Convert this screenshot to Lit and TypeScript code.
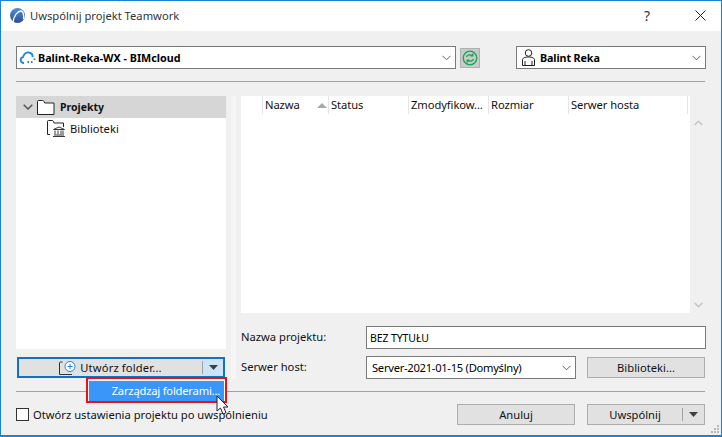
import { LitElement, html, css } from "lit";
import { customElement } from "lit/decorators.js";

const chevron = html`<svg class="chev" width="9" height="6" viewBox="0 0 9 6"><path d="M.5.8 4.500 4.800 8.500.8" fill="none" stroke="#606060" stroke-width="1"/></svg>`;
const caret = html`<svg width="9" height="5" viewBox="0 0 9 5"><path d="M0 0h9L4.500 5z" fill="#404040"/></svg>`;

@customElement("app-root")
export class AppRoot extends LitElement {
  static styles = css`
    :host { display: block; width: 722px; height: 437px; font-family: "Noto Sans", sans-serif; font-size: 11.2px; color: #111; }
    * { box-sizing: border-box; }
    .window { position: relative; width: 722px; height: 437px; border: 1px solid #1883d7; border-bottom-width: 2px; background: #f0f0f0; display: flex; flex-direction: column; overflow: hidden; }
    .title { height: 30px; flex: none; background: #fff; display: flex; align-items: center; padding: 0 0 2px 9px; gap: 5px; color: #333; }
    .title .name { flex: 1; }
    .help { width: 46px; text-align: center; font-size: 14px; margin-right: 7px; }
    .close { width: 36px; height: 28px; display: flex; align-items: center; justify-content: center; margin-right: 3px; }
    .body { flex: 1; display: flex; flex-direction: column; padding: 15px 15px 0; min-height: 0; }
    .top { display: flex; height: 23px; align-items: center; }
    .combo { height: 23px; background: #fff; border: 1px solid #7a7a7a; display: flex; align-items: center; font-weight: 700; font-size: 10.75px; color: #000; }
    .combo .grow { flex: 1; white-space: nowrap; }
    .combo .chev { margin-right: 4px; }
    .server { width: 440px; padding-left: 2px; gap: 2px; }
    .user { width: 190px; margin-left: auto; padding-left: 5px; gap: 5px; letter-spacing: -.12px; }
    .sync { width: 20px; height: 20px; margin-left: 4px; background: #cacaca; border: 1px solid #b0b0b0; display: flex; align-items: center; justify-content: center; }
    .sep { height: 1px; background: #a0a0a0; margin-right: 1px; flex: none; }
    .sep1 { margin-top: 12px; }
    .main { display: grid; grid-template-columns: 210px 5px 5px 5px 465px; margin-top: 14px; height: 283px; flex: none; }
    .left { grid-column: 1; display: flex; flex-direction: column; position: relative; }
    .strip { grid-column: 3; background: #f6f6f6; }
    .right { grid-column: 5; display: flex; flex-direction: column; }
    .tree { flex: 1; background: #fff; }
    .row { height: 22px; display: flex; align-items: center; }
    .row.sel { background: #d6d6d6; font-weight: 700; font-size: 10.5px; padding-left: 7px; }
    .row.sel svg.fold { margin-left: 4px; margin-right: 5px; }
    .row.sub { padding-left: 31px; padding-bottom: 2px; gap: 4px; }
    .split { margin: 8px 1px 1px; height: 21px; flex: none; border: 2px solid #0f72c4; background: #e1e1e1; display: flex; }
    .split .lbl { flex: 1; display: flex; align-items: center; justify-content: center; gap: 3px; letter-spacing: .15px; border-right: 1px solid #a0a0a0; margin: 2px 0; }
    .split .arrow { width: 20px; background: #cce4f7; display: flex; align-items: center; justify-content: center; }
    .list { height: 217px; flex: none; display: flex; }
    .grid { width: 449px; background: #fff; }
    .head { height: 18px; display: flex; width: 447px; background: #fff; border-right: 1px solid #e5e5e5; letter-spacing: -.08px; }
    .head div { border-left: 1px solid #e5e5e5; padding-left: 2px; line-height: 18px; white-space: nowrap; position: relative; }
    .head div:first-child { border-left: 0; padding: 0; }
    .head svg { position: absolute; right: 1px; top: 7px; }
    .scroll { flex: 1; display: flex; flex-direction: column; justify-content: space-between; align-items: center; padding: 24px 0 5px; }
    .form { display: grid; grid-template-columns: 125px 210px 11px 119px; margin-top: 13px; row-gap: 7px; align-items: center; }
    .lab { padding-bottom: 2px; }
    .inp { height: 23px; background: #fff; border: 1px solid #7a7a7a; display: flex; align-items: center; padding-left: 3px; color: #000; }
    .wide { grid-column: 2 / 5; font-size: 10.5px; letter-spacing: -.1px; }
    .select { padding-left: 5px; justify-content: space-between; letter-spacing: -.28px; }
    .select .chev { margin-right: 4px; }
    .btn { height: 21px; background: #e1e1e1; border: 1px solid #adadad; display: flex; align-items: center; justify-content: center; }
    .form .btn { width: 118px; }
    .sep2 { margin-top: 12px; }
    .foot { margin-top: 12px; display: flex; align-items: center; height: 21px; }
    .check { width: 13px; height: 13px; background: #fff; border: 1px solid #333; margin-right: 4px; }
    .chk { flex: 1; white-space: nowrap; }
    .foot .btn { width: 118px; }
    .foot .b1 { margin-right: 12px; }
    .foot .b2 { margin-right: 1px; padding: 0; }
    .foot .b2 .t { flex: 1; text-align: center; }
    .foot .b2 .a { width: 22px; height: 13px; border-left: 1px solid #a0a0a0; display: flex; align-items: center; justify-content: center; }
    .menu { position: absolute; left: 85px; top: 376px; width: 141px; height: 26px; border: 2px solid #e8121c; padding: 2px 1px 0; background: #fff; z-index: 2; }
    .menu div { height: 100%; background: #3a96f8; color: #fff; text-align: right; padding-right: 4px; line-height: 20px; white-space: nowrap; letter-spacing: -.2px; }
    .cursor { position: absolute; left: 215px; top: 394px; z-index: 3; }
    .grip { position: absolute; right: 1px; bottom: 1px; }
  `;

  render() {
    return html`<div class="window">
      <div class="title">
        <svg width="15" height="15" viewBox="0 0 15 15"><defs><linearGradient id="lg" x1="0" y1="0" x2="0" y2="1"><stop offset="0" stop-color="#4f8fd8"/><stop offset="1" stop-color="#2d4f96"/></linearGradient></defs><circle cx="7.500" cy="7.500" r="7.500" fill="url(#lg)"/><path d="M3 14C4 7 8 3 11 3c2 0 3 3 2.600 8" fill="none" stroke="#fff" stroke-width="1.400"/></svg>
        <span class="name">Uwspólnij projekt Teamwork</span>
        <span class="help">?</span>
        <span class="close"><svg width="11" height="11" viewBox="0 0 11 11"><path d="M.5.5l10 10M10.500.5l-10 10" stroke="#222" stroke-width="1" fill="none"/></svg></span>
      </div>
      <div class="body">
        <div class="top">
          <div class="combo server">
            <svg width="17" height="13" viewBox="0 0 17 13"><path d="M5 12C1 12 .5 7 4 6.200 4.500 3 7.500 1 10 1.500c2.500.5 3.700 2.500 3.700 4.500M15.500 7.500v1.500M12 11h1.500M8.500 11h1.500" fill="none" stroke="#1d86e8" stroke-width="1.800"/></svg>
            <span class="grow">Balint-Reka-WX - BIMcloud</span>${chevron}
          </div>
          <div class="sync"><svg width="16" height="16" viewBox="0 0 16 16" fill="none" stroke="#12a850" stroke-width="1.300"><circle cx="8" cy="8" r="6.800"/><path d="M4.500 7C5.200 4.800 8 4.200 10.300 5.400M10.800 3.400v2.400H8.400M11.500 9C10.800 11.200 8 11.800 5.700 10.600M5.200 12.600v-2.400h2.400"/></svg></div>
          <div class="combo user">
            <svg width="13" height="17" viewBox="0 0 13 17" fill="none" stroke="#222" stroke-width="1"><circle cx="6.500" cy="4" r="3.300"/><path d="M.5 16.500V11c0-2 2-3 6-3s6 1 6 3v5.500zM3 16v-4M10 16v-4"/></svg>
            <span class="grow">Balint Reka</span>${chevron}
          </div>
        </div>
        <div class="sep sep1"></div>
        <div class="main">
          <div class="left">
            <div class="tree">
              <div class="row sel">
                <svg width="10" height="6" viewBox="0 0 10 6"><path d="M.7.7 5 5l4.300-4.300" fill="none" stroke="#555" stroke-width="1.500"/></svg>
                <svg class="fold" width="18" height="15" viewBox="0 0 18 15"><path d="M.5 14.500V1.500q0-1 1-1h4q1 0 1.500 1l.7 1.500h9.300v11.500z" fill="#fff" stroke="#222"/></svg>
                Projekty
              </div>
              <div class="row sub">
                <svg width="19" height="17" viewBox="0 0 19 17" fill="none" stroke="#222"><path d="M3 14.500H.5V1.500q0-1 1-1h3.500q1 0 1.500 1l.5 1.500h9.500v4"/><path d="M6 16.500h12M7 15h10M8 14.200v-3.700M11 14.200v-3.700M14 14.200v-3.700M16 14.200v-3.700M6.500 9.500 12 7l5.500 2.500z" stroke-width=".9"/></svg>
                Biblioteki
              </div>
            </div>
            <div class="split">
              <div class="lbl">
                <svg width="18" height="14" viewBox="0 0 18 14" fill="none"><path d="M3.500 1h-2q-1 0-1 1v11.500H3M3 13.500h10" stroke="#333"/><circle cx="11" cy="5.500" r="5" fill="#fff" stroke="#1d86e8"/><path d="M11 3v5M8.500 5.500h5" stroke="#1d86e8"/></svg>
                Utwórz folder...
              </div>
              <div class="arrow">${caret}</div>
            </div>
          </div>
          <div class="strip"></div>
          <div class="right">
            <div class="list">
              <div class="grid">
                <div class="head">
                  <div style="width:21px"></div>
                  <div style="width:66px">Nazwa<svg width="10" height="5" viewBox="0 0 10 5"><path d="M0 5h10L5 0z" fill="#a8a8a8"/></svg></div>
                  <div style="width:80px">Status</div>
                  <div style="width:80px">Zmodyfikow...</div>
                  <div style="width:80px">Rozmiar</div>
                  <div style="width:119px">Serwer hosta</div>
                </div>
              </div>
              <div class="scroll">
                <svg width="9" height="6" viewBox="0 0 9 6"><path d="M.7 5 4.500 1.300 8.300 5" fill="none" stroke="#c4c4c4" stroke-width="1.600"/></svg>
                <svg width="9" height="6" viewBox="0 0 9 6"><path d="M.7 1 4.500 4.700 8.300 1" fill="none" stroke="#c4c4c4" stroke-width="1.600"/></svg>
              </div>
            </div>
            <div class="form">
              <span class="lab">Nazwa projektu:</span>
              <div class="inp wide">BEZ TYTUŁU</div>
              <span class="lab">Serwer host:</span>
              <div class="inp select"><span>Server-2021-01-15 (Domyślny)</span>${chevron}</div>
              <span></span>
              <div class="btn">Biblioteki...</div>
            </div>
          </div>
        </div>
        <div class="sep sep2"></div>
        <div class="foot">
          <span class="check"></span><span class="chk">Otwórz ustawienia projektu po uwspólnieniu</span>
          <div class="btn b1">Anuluj</div>
          <div class="btn b2"><span class="t">Uwspólnij</span><span class="a">${caret}</span></div>
        </div>
      </div>
      <div class="menu"><div>Zarządzaj folderami...</div></div>
      <svg class="cursor" width="14" height="21" viewBox="0 0 14 21"><path d="M1 1v15l3.500-3 2.500 6 3-1.300-2.500-5.700H12z" fill="#fff" stroke="#222" stroke-width="1"/></svg>
      <svg class="grip" width="9" height="9" viewBox="0 0 9 9" fill="#b8b8b8"><rect x="6" y="0" width="2" height="2"/><rect x="3" y="3" width="2" height="2"/><rect x="6" y="3" width="2" height="2"/><rect x="0" y="6" width="2" height="2"/><rect x="3" y="6" width="2" height="2"/><rect x="6" y="6" width="2" height="2"/></svg>
    </div>`;
  }
}
